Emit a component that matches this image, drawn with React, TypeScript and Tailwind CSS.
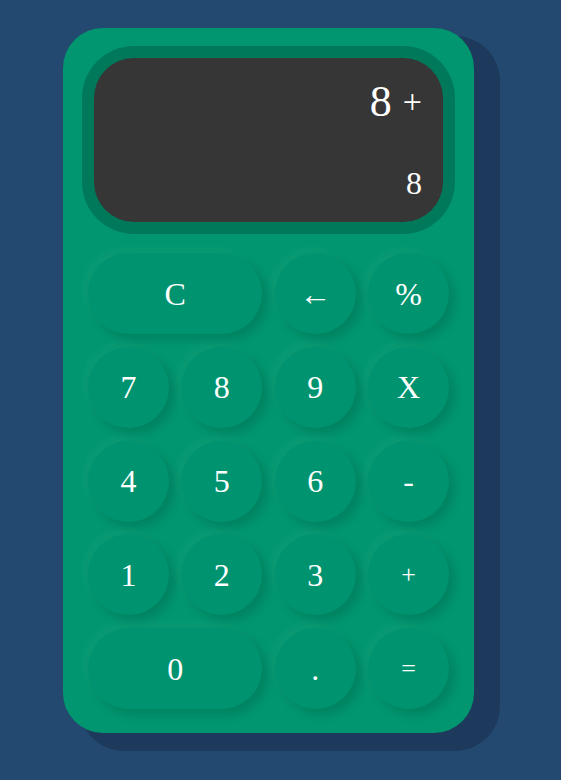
import React from "react";

const serif = { fontFamily: '"Liberation Serif", "DejaVu Serif", serif' };

type Key = { label: string; wide?: boolean; small?: boolean };

const keys: Key[] = [
  { label: "C", wide: true },
  { label: "←" },
  { label: "%" },
  { label: "7" },
  { label: "8" },
  { label: "9" },
  { label: "X" },
  { label: "4" },
  { label: "5" },
  { label: "6" },
  { label: "-" },
  { label: "1" },
  { label: "2" },
  { label: "3" },
  { label: "+", small: true },
  { label: "0", wide: true },
  { label: "." },
  { label: "=", small: true },
];

export default function App() {
  return (
    <div className="w-full h-[780px] bg-[#234970] overflow-hidden" style={serif}>
      <div className="pt-[28px] pl-[63px]">
        <div className="w-[411px] h-[705px] rounded-[40px] bg-[#01966f] shadow-[21px_13px_0_5px_#1d3a5c] pt-[18px] px-[19px] flex flex-col">
          <div className="h-[188px] rounded-[52px] bg-[#00785a] p-[12px]">
            <div className="h-full rounded-[40px] bg-[#363636] flex flex-col justify-between items-end pt-[22px] pb-[23px] pr-[21px] text-white">
              <div className="flex items-center gap-[11px]">
                <span className="text-[44px] leading-[44px]">8</span>
                <span className="text-[34px] leading-[34px]">+</span>
              </div>
              <span className="text-[32px] leading-[32px]">8</span>
            </div>
          </div>
          <div className="mt-[19px] px-[6px] grid grid-cols-4 gap-x-[12.5px] gap-y-[12.75px]">
            {keys.map((k, i) => (
              <div
                key={i}
                className={
                  (k.wide ? "col-span-2 " : "") +
                  "h-[81px] rounded-full bg-[#00936f] shadow-[6px_6px_10px_rgba(0,0,0,0.13),-5px_-5px_10px_rgba(255,255,255,0.04)] flex items-center justify-center text-white " +
                  (k.small ? "text-[26px]" : "text-[32px]")
                }
              >
                {k.label}
              </div>
            ))}
          </div>
        </div>
      </div>
    </div>
  );
}
